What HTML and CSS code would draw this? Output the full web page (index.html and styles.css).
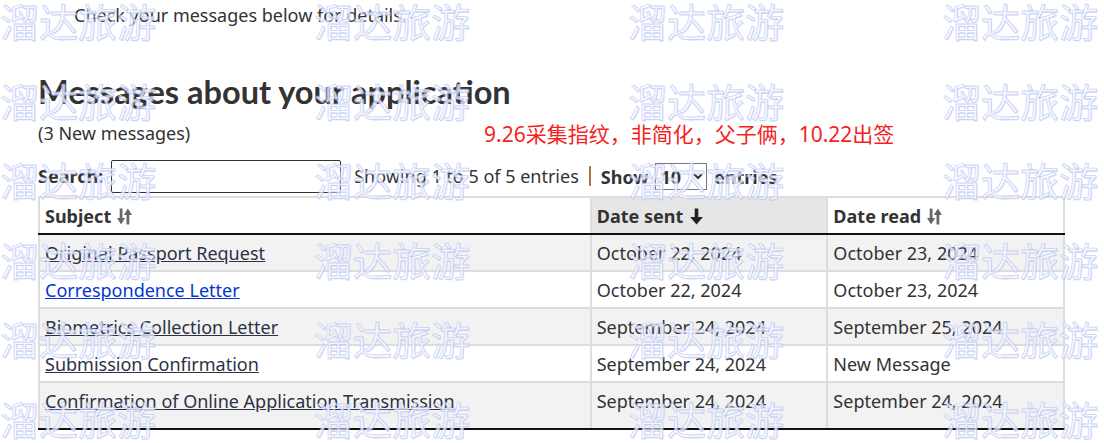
FILE: index.html
```html
<!DOCTYPE html>
<html lang="en">
<head>
  <meta charset="UTF-8" />
  <meta name="viewport" content="width=device-width, initial-scale=1.0"/>
  <title>Messages about your application</title>
  <link rel="stylesheet" href="styles.css">
</head>
<body>
  <main class="page">
    <p class="intro">Check your messages below for details.</p>

    <h1>Messages about your application</h1>
    <div class="sub-row">
      <span class="count">(3 New messages)</span>
      <span class="note">9.26采集指纹，非简化，父子俩，10.22出签</span>
    </div>

    <div class="toolbar">
      <label class="search">Search: <input type="text" /></label>
      <span class="info">Showing 1 to 5 of 5 entries</span>
      <span class="sep"></span>
      <label class="length">Show
        <select><option>10</option></select>
        entries</label>
    </div>

    <table class="messages">
      <thead>
        <tr>
          <th class="col-subject">Subject
            <svg class="sort" viewBox="0 0 14 16"><path d="M3.8 0.5v10" stroke="#666" stroke-width="2.6"/><path d="M0 9.5h7.6L3.8 15.5z" fill="#666"/><path d="M10.2 15.5v-10" stroke="#666" stroke-width="2.6"/><path d="M6.4 6.5h7.6L10.2 0.5z" fill="#666"/></svg>
          </th>
          <th class="col-date sorted">Date sent
            <svg class="sort" viewBox="0 0 14 16"><path d="M7 0.5v9" stroke="#222" stroke-width="3.4"/><path d="M1 8.5h12L7 15.5z" fill="#222"/></svg>
          </th>
          <th class="col-date">Date read
            <svg class="sort" viewBox="0 0 14 16"><path d="M3.8 0.5v10" stroke="#666" stroke-width="2.6"/><path d="M0 9.5h7.6L3.8 15.5z" fill="#666"/><path d="M10.2 15.5v-10" stroke="#666" stroke-width="2.6"/><path d="M6.4 6.5h7.6L10.2 0.5z" fill="#666"/></svg>
          </th>
        </tr>
      </thead>
      <tbody>
        <tr>
          <td><a href="#" class="visited">Original Passport Request</a></td>
          <td>October 22, 2024</td>
          <td>October 23, 2024</td>
        </tr>
        <tr>
          <td><a href="#">Correspondence Letter</a></td>
          <td>October 22, 2024</td>
          <td>October 23, 2024</td>
        </tr>
        <tr>
          <td><a href="#" class="visited">Biometrics Collection Letter</a></td>
          <td>September 24, 2024</td>
          <td>September 25, 2024</td>
        </tr>
        <tr>
          <td><a href="#" class="visited">Submission Confirmation</a></td>
          <td>September 24, 2024</td>
          <td>New Message</td>
        </tr>
        <tr class="last">
          <td><a href="#" class="visited">Confirmation of Online Application Transmission</a></td>
          <td>September 24, 2024</td>
          <td>September 24, 2024</td>
        </tr>
      </tbody>
    </table>
  </main>

  <div class="watermarks">
    <span>溜达旅游</span><span>溜达旅游</span><span>溜达旅游</span><span>溜达旅游</span>
    <span>溜达旅游</span><span>溜达旅游</span><span>溜达旅游</span><span>溜达旅游</span>
    <span>溜达旅游</span><span>溜达旅游</span><span>溜达旅游</span><span>溜达旅游</span>
    <span>溜达旅游</span><span>溜达旅游</span><span>溜达旅游</span><span>溜达旅游</span>
    <span>溜达旅游</span><span>溜达旅游</span><span>溜达旅游</span><span>溜达旅游</span>
    <span>溜达旅游</span><span>溜达旅游</span><span>溜达旅游</span><span>溜达旅游</span>
  </div>
</body>
</html>
```

FILE: styles.css
```css
* {
  box-sizing: border-box;
}

html, body {
  height: 443px;
  overflow: hidden;
}

body {
  margin: 0;
  font-family: 'Noto Sans', 'Open Sans', sans-serif;
  font-size: 18px;
  color: #333;
  background: #fff;
  position: relative;
}

.page {
  padding: 0 0 0 38px;
  width: 1066px;
}

.intro {
  margin: 3px 0 0 36px;
  line-height: 24px;
}

h1 {
  font-family: Lato, 'Noto Sans', sans-serif;
  font-weight: 700;
  font-size: 32.5px;
  line-height: 40px;
  margin: 45px 0 0;
  color: #333;
}

.sub-row {
  display: flex;
  align-items: center;
  height: 28px;
  margin-top: 7px;
}

.count {
  width: 446px;
}

.note {
  color: #f51f1f;
  font-size: 21px;
  font-family: 'Noto Sans', 'Noto Sans CJK SC', sans-serif;
}

.toolbar {
  display: flex;
  align-items: center;
  margin-top: 12px;
  height: 34px;
}

.search {
  font-weight: 700;
  display: flex;
  align-items: center;
  gap: 8px;
}

.search input {
  width: 230px;
  height: 33px;
  border: 1px solid #333;
  border-radius: 2px;
}

.info {
  margin-left: 13px;
}

.sep {
  width: 2px;
  height: 20px;
  background: #a87545;
  margin: 0 10px 0 10px;
}

.length {
  font-weight: 700;
}

.length select {
  font-family: 'Noto Sans', sans-serif;
  font-size: 18px;
  font-weight: 700;
  color: #333;
  height: 27px;
  width: 52px;
  border: 1px solid #767676;
  border-radius: 0;
  background: #fff;
  margin: 0 2px;
  padding: 0;
}

.messages {
  border-collapse: collapse;
  width: 1027px;
  margin-top: 3px;
  border-left: 2px solid #ddd;
  border-right: 2px solid #ddd;
  border-bottom: 2px solid #111;
}

.messages th,
.messages td {
  text-align: left;
  padding: 6px 4px 5px 5px;
  line-height: 24px;
  border: 2px solid #ddd;
}

.messages th {
  border-bottom: 2px solid #111;
  white-space: nowrap;
}

.col-subject {
  width: 553px;
}

.col-date {
  width: 237px;
}

.messages th.sorted {
  background: #e6e6e6;
}

.sort {
  width: 15px;
  height: 17px;
  vertical-align: -2px;
  margin-left: 1px;
}

.messages tbody tr:nth-child(odd) {
  background: #f2f2f2;
}

.messages tr.last td {
  padding-bottom: 15px;
  border-bottom: 2px solid #111;
}

.messages a {
  color: #0535d2;
}

.messages a.visited {
  color: #2b3243;
}

.watermarks {
  position: absolute;
  top: 0;
  left: 0;
  width: 1104px;
  height: 443px;
  overflow: hidden;
  display: grid;
  grid-template-columns: repeat(4, 314px);
  grid-auto-rows: 79.6px;
  pointer-events: none;
}

.watermarks span {
  font-family: 'Noto Sans CJK SC', sans-serif;
  font-size: 39px;
  line-height: 40px;
  color: rgba(255, 255, 255, 0.65);
  -webkit-text-stroke: 0.8px rgba(170, 184, 244, 0.65);
  text-shadow: 1px 1px 0 rgba(205, 212, 248, 0.45);
  white-space: nowrap;
}
```
